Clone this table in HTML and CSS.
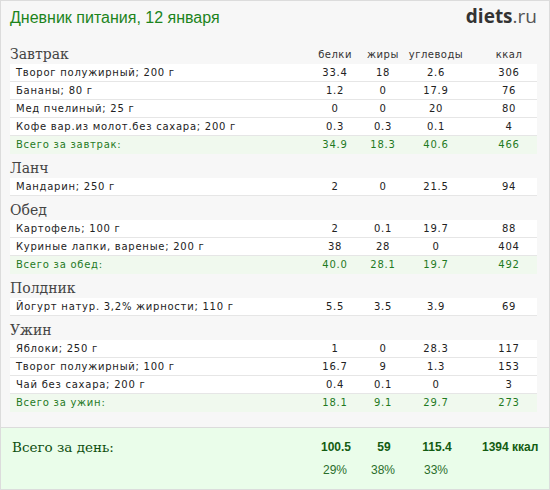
FILE: index.html
```html
<!doctype html>
<html>
<head>
<meta charset="UTF-8">
<title>Дневник питания</title>
<link rel="stylesheet" href="styles.css">
</head>
<body>
<div class="diary">
	<div class="top">
		<h1 class="title">Дневник питания, 12 января</h1>
		<div class="logo"><b>diets</b>.ru</div>
	</div>

	<div class="meal">
		<div class="grid meal-head">
			<h2>Завтрак</h2><span>белки</span><span>жиры</span><span>углеводы</span><span class="kcal">ккал</span>
		</div>
		<div class="grid row"><span class="name">Творог полужирный; 200 г</span><span>33.4</span><span>18</span><span>2.6</span><span class="kcal">306</span></div>
		<div class="grid row"><span class="name">Бананы; 80 г</span><span>1.2</span><span>0</span><span>17.9</span><span class="kcal">76</span></div>
		<div class="grid row"><span class="name">Мед пчелиный; 25 г</span><span>0</span><span>0</span><span>20</span><span class="kcal">80</span></div>
		<div class="grid row"><span class="name">Кофе вар.из молот.без сахара; 200 г</span><span>0.3</span><span>0.3</span><span>0.1</span><span class="kcal">4</span></div>
		<div class="grid row total"><span class="name">Всего за завтрак:</span><span>34.9</span><span>18.3</span><span>40.6</span><span class="kcal">466</span></div>
	</div>

	<div class="meal">
		<div class="grid meal-head"><h2>Ланч</h2></div>
		<div class="grid row"><span class="name">Мандарин; 250 г</span><span>2</span><span>0</span><span>21.5</span><span class="kcal">94</span></div>
	</div>

	<div class="meal">
		<div class="grid meal-head"><h2>Обед</h2></div>
		<div class="grid row"><span class="name">Картофель; 100 г</span><span>2</span><span>0.1</span><span>19.7</span><span class="kcal">88</span></div>
		<div class="grid row"><span class="name">Куриные лапки, вареные; 200 г</span><span>38</span><span>28</span><span>0</span><span class="kcal">404</span></div>
		<div class="grid row total"><span class="name">Всего за обед:</span><span>40.0</span><span>28.1</span><span>19.7</span><span class="kcal">492</span></div>
	</div>

	<div class="meal">
		<div class="grid meal-head"><h2>Полдник</h2></div>
		<div class="grid row"><span class="name">Йогурт натур. 3,2% жирности; 110 г</span><span>5.5</span><span>3.5</span><span>3.9</span><span class="kcal">69</span></div>
	</div>

	<div class="meal">
		<div class="grid meal-head"><h2>Ужин</h2></div>
		<div class="grid row"><span class="name">Яблоки; 250 г</span><span>1</span><span>0</span><span>28.3</span><span class="kcal">117</span></div>
		<div class="grid row"><span class="name">Творог полужирный; 100 г</span><span>16.7</span><span>9</span><span>1.3</span><span class="kcal">153</span></div>
		<div class="grid row"><span class="name">Чай без сахара; 200 г</span><span>0.4</span><span>0.1</span><span>0</span><span class="kcal">3</span></div>
		<div class="grid row total"><span class="name">Всего за ужин:</span><span>18.1</span><span>9.1</span><span>29.7</span><span class="kcal">273</span></div>
	</div>

	<div class="day">
		<div class="grid day-sum">
			<h2>Всего за день:</h2><b>100.5</b><b>59</b><b>115.4</b><b class="kcal">1394 ккал</b>
		</div>
		<div class="grid day-pct">
			<span></span><span>29%</span><span>38%</span><span>33%</span><span class="kcal"></span>
		</div>
	</div>
</div>
</body>
</html>
```

FILE: styles.css
```css
html, body {
	margin:0;
	padding:0;
	}

body {
	font-family:"DejaVu Sans", Verdana, sans-serif;
	color:#222;
	}

.diary {
	box-sizing:border-box;
	width:550px;
	height:490px;
	border:1px solid #dcdcdc;
	background:#f7f7f7;
	display:flex;
	flex-direction:column;
	}

.top {
	height:39px;
	display:flex;
	justify-content:space-between;
	align-items:flex-start;
	padding:0 12px 0 9px;
	}

.title {
	margin:6px 0 0;
	font-family:"Liberation Sans", Arial, sans-serif;
	font-weight:normal;
	font-size:16px;
	line-height:22px;
	color:#1c841c;
	}

.logo {
	margin-top:3px;
	font-family:"Open Sans", Arial, sans-serif;
	font-size:19px;
	line-height:24px;
	color:#555;
	}

.logo b {
	color:#333;
	}

.grid {
	display:grid;
	grid-template-columns:1fr 48px 48px 58px 72px;
	align-items:center;
	margin:0 12px 0 9px;
	text-align:center;
	white-space:nowrap;
	}

.grid .kcal {
	padding-left:16px;
	}

.meal-head {
	box-sizing:border-box;
	height:24px;
	padding-top:4px;
	font-size:10px;
	letter-spacing:0.5px;
	color:#333;
	}

.meal-head h2 {
	margin:0;
	text-align:left;
	font-family:"DejaVu Serif", Georgia, serif;
	font-weight:normal;
	font-size:14px;
	line-height:20px;
	letter-spacing:0;
	color:#444;
	}

.row {
	height:17px;
	border-bottom:1px solid #e6e6e6;
	background:#fff;
	font-size:10px;
	letter-spacing:0.75px;
	}

.row .name {
	text-align:left;
	padding-left:6px;
	}

.row.total {
	background:#f0f9ee;
	border-bottom-color:#f0f9ee;
	color:#1f7a1f;
	}

.day {
	flex:1;
	margin-top:15px;
	border-top:1px solid #dcdcdc;
	background:#eafdea;
	padding-top:9px;
	font-family:"Liberation Sans", Arial, sans-serif;
	font-size:12px;
	color:#135c13;
	}

.day-sum {
	height:20px;
	margin-right:11px;
	}

.day-sum h2 {
	margin:0 0 0 2px;
	text-align:left;
	font-family:"DejaVu Serif", Georgia, serif;
	font-weight:normal;
	font-size:13.5px;
	color:#0f4f0f;
	}

.day-pct {
	height:20px;
	margin-top:3px;
	color:#2a6e2a;
	}
```
